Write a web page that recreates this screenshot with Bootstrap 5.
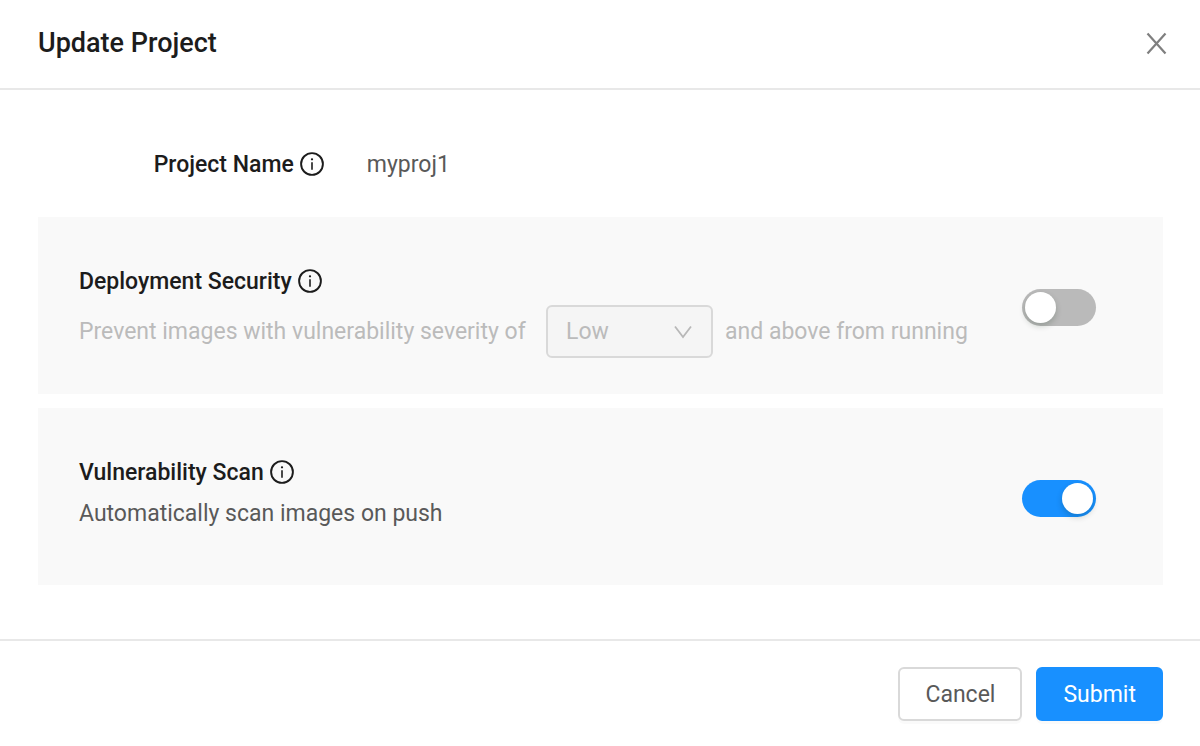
<!DOCTYPE html>
<html lang="en">
<head>
<meta charset="utf-8">
<meta name="viewport" content="width=device-width, initial-scale=1">
<title>Update Project</title>
<link href="https://cdn.jsdelivr.net/npm/bootstrap@5.3.0/dist/css/bootstrap.min.css" rel="stylesheet">
<style>
  body { font-family: Roboto, "Liberation Sans", sans-serif; font-size: 23px; line-height: 36px; color: #595959; background: #fff; }
  .dialog-head { padding: 23px 32px 25px 38px; border-bottom: 2px solid #e8e8e8; }
  .dialog-title { font-size: 27px; line-height: 40px; font-weight: 500; color: #1c1c1c; }
  .dialog-body { padding: 57px 37px 54px 38px; }
  .dialog-foot { padding: 26px 37px; border-top: 2px solid #e8e8e8; gap: 14px; }
  .close-btn { color: #7f7f7f; line-height: 0; }
  .field-label { font-weight: 500; color: #1c1c1c; gap: 6px; }
  .info-icon { width: 24px; height: 24px; margin-bottom: 2px; }
  .name-row { padding-bottom: 34px; }
  .name-label { width: 25.4%; }
  .name-value { padding-left: 43px; }
  .panel { background: #f9f9f9; padding: 38px 67px 34px 41px; }
  .panel + .panel { margin-top: 14px; }
  .panel-inner { min-height: 105px; }
  .panel-text { padding-top: 9px; margin-bottom: 5px; }
  .muted-text { color: #bbb; gap: 12px; }
  .muted-text label { min-width: 455px; }
  .severity { width: 167px; height: 53px; padding: 0 18px; font-size: 23px; line-height: 36px; border: 2px solid #d9d9d9; border-radius: 6px; }
  .severity:disabled { color: #bbb; background-color: #f5f5f5; opacity: 1;
    background-image: url("data:image/svg+xml,%3Csvg xmlns='http://www.w3.org/2000/svg' viewBox='0 0 20 14'%3E%3Cpath d='M2 1.500l8 10.500 8-10.500' fill='none' stroke='%23b8b8b8' stroke-width='1.800'/%3E%3C/svg%3E");
    background-size: 20px 14px; background-position: right 18px center; }
  .toggle .form-check-input { width: 74px; height: 37px; margin: 0; border: 0; background-color: #bababa; border-radius: 19px; background-image: none; cursor: pointer; }
  .toggle .form-check-input::before { content: ""; display: block; width: 31px; height: 31px; margin: 3px; border-radius: 50%; background: #fff; box-shadow: 0 3px 6px rgba(0,35,11,.2); }
  .toggle .form-check-input:checked { background-color: #1890ff; background-image: none; }
  .toggle .form-check-input:checked::before { margin-left: 40px; }
  .action { height: 54px; padding: 2px 25px 0; font-size: 23px; line-height: 36px; border-width: 2px; border-radius: 6px; box-shadow: 0 3px 0 rgba(0,0,0,.02); }
  .action-cancel { color: #595959; background: #fff; border-color: #d9d9d9; }
  .action-submit { color: #fff; background: #1890ff; border-color: #1890ff; }
</style>
</head>
<body>
<svg class="d-none" aria-hidden="true">
  <symbol id="info" viewBox="0 0 24 24">
    <circle cx="12" cy="12" r="10.900" fill="none" stroke="currentColor" stroke-width="1.900"/>
    <circle cx="12" cy="7.300" r="1.150" fill="currentColor"/>
    <path d="M12 10.200v7.600" stroke="currentColor" stroke-width="1.600"/>
  </symbol>
</svg>
<main>
  <header class="dialog-head d-flex align-items-center justify-content-between">
    <h1 class="dialog-title mb-0">Update Project</h1>
    <button type="button" class="close-btn btn p-0 border-0" aria-label="Close">
      <svg width="24" height="24" viewBox="0 0 24 24"><path d="M3.500 2.500l18 20M21.500 2.500l-18 20" stroke="currentColor" stroke-width="2.200"/></svg>
    </button>
  </header>
  <form>
    <div class="dialog-body">
      <div class="name-row d-flex">
        <div class="name-label field-label d-flex align-items-center justify-content-end">
          Project Name <svg class="info-icon"><use href="#info"/></svg>
        </div>
        <div class="name-value">myproj1</div>
      </div>
      <section class="panel d-flex align-items-center justify-content-between">
        <div class="panel-inner">
          <label for="deploy" class="field-label panel-text d-flex align-items-center">Deployment Security <svg class="info-icon"><use href="#info"/></svg></label>
          <div class="muted-text d-flex align-items-center">
            <label for="severity">Prevent images with vulnerability severity of</label>
            <select id="severity" class="severity form-select" disabled><option>Low</option></select>
            <span>and above from running</span>
          </div>
        </div>
        <div class="toggle form-switch p-0 d-flex"><input class="form-check-input" type="checkbox" role="switch" id="deploy"></div>
      </section>
      <section class="panel d-flex align-items-center justify-content-between">
        <div class="panel-inner">
          <label for="scan" class="field-label panel-text d-flex align-items-center">Vulnerability Scan <svg class="info-icon"><use href="#info"/></svg></label>
          <div>Automatically scan images on push</div>
        </div>
        <div class="toggle form-switch p-0 d-flex"><input class="form-check-input" type="checkbox" role="switch" id="scan" checked></div>
      </section>
    </div>
    <footer class="dialog-foot d-flex justify-content-end">
      <button type="button" class="action action-cancel btn">Cancel</button>
      <button type="submit" class="action action-submit btn">Submit</button>
    </footer>
  </form>
</main>
<script src="https://cdn.jsdelivr.net/npm/bootstrap@5.3.0/dist/js/bootstrap.bundle.min.js"></script>
</body>
</html>
